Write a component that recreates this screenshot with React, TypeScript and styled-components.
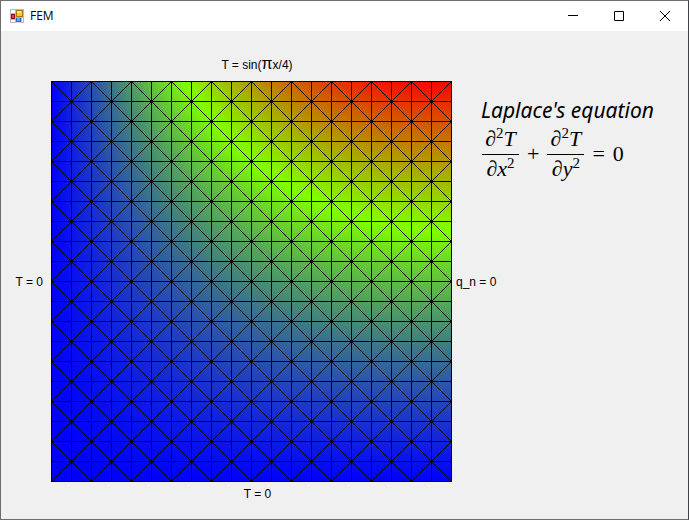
import React from "react";
import styled, { createGlobalStyle } from "styled-components";

const GlobalStyle = createGlobalStyle`
  * { box-sizing: border-box; }
  body { margin: 0; background: #f0f0f0; }
`;

const Window = styled.div`
  display: flex;
  flex-direction: column;
  min-height: 100vh;
  border: 1px solid #6d6d6f;
  border-right-color: #3d4148;
  background: #f0f0f0;
  color: #000;
  font-family: "Liberation Sans", Arial, sans-serif;
`;

const TitleBar = styled.header`
  display: flex;
  align-items: center;
  height: 30px;
  padding-left: 9px;
  background: #fff;
`;

const Title = styled.h1`
  flex: 1;
  margin: 0 0 0 6px;
  font: 400 12px/16px "Open Sans", "Noto Sans", sans-serif;
`;

const ControlButton = styled.button`
  display: flex;
  align-items: center;
  justify-content: center;
  width: 46px;
  height: 30px;
  padding: 0;
  border: 0;
  background: transparent;
  color: #000;
  &:hover { background: #e5e5e5; }
`;

const Stage = styled.main`
  display: grid;
  grid-template-columns: 50px auto minmax(0, 1fr);
  grid-template-rows: 50px auto 25px;
`;

const Label = styled.div`
  font-size: 12px;
  line-height: 16px;
`;

const TopLabel = styled(Label)`
  grid-area: 1 / 2;
  align-self: end;
  padding: 0 0 8px 11px;
  text-align: center;
`;

const Pi = styled.span`
  font-size: 16px;
  line-height: 1px;
`;

const LeftLabel = styled(Label)`
  grid-area: 2 / 1;
  align-self: center;
  padding-right: 8px;
  text-align: right;
`;

const RightLabel = styled(Label)`
  grid-area: 2 / 3;
  align-self: center;
  padding-left: 4px;
`;

const BottomLabel = styled(Label)`
  grid-area: 3 / 2;
  align-self: start;
  padding: 4px 0 0 12px;
  text-align: center;
`;

const Plot = styled.svg`
  grid-area: 2 / 2;
  display: block;
`;

const Notes = styled.section`
  grid-area: 2 / 3;
  align-self: start;
  padding: 15px 0 0 29px;
`;

const Heading = styled.h2`
  margin: 0;
  font: italic 400 21px/28px "Noto Sans", sans-serif;
  white-space: nowrap;
`;

const Equation = styled.div`
  display: flex;
  align-items: center;
  gap: 8px;
  margin-top: 3px;
  padding-left: 1px;
  font: 400 22px/24px "Liberation Serif", serif;
`;

const Fraction = styled.span`
  display: flex;
  flex-direction: column;
  align-items: center;
  min-width: 37px;
`;

const Term = styled.span<{ $over?: boolean }>`
  align-self: stretch;
  padding: ${(p) => (p.$over ? "0 0 3px" : "2px 0 0")};
  text-align: center;
  font-style: italic;
  border-bottom: ${(p) => (p.$over ? "1px solid #000" : "0")};
`;

const Power = styled.sup`
  font-size: 15px;
  line-height: 1px;
  font-style: normal;
`;

const CELLS = 20;
const STEP = 20;
const SIZE = CELLS * STEP;

type Node = [number, number];

const temperature = ([i, j]: Node) => {
  const x = (2 * i) / CELLS;
  const y = 2 - (2 * j) / CELLS;
  return (Math.sin((Math.PI * x) / 4) * Math.sinh((Math.PI * y) / 4)) / Math.sinh(Math.PI / 2);
};

const buildTriangles = () => {
  const list: Node[][] = [];
  for (let j = 0; j < CELLS; j++) {
    for (let i = 0; i < CELLS; i++) {
      const a: Node = [i, j];
      const b: Node = [i + 1, j];
      const c: Node = [i + 1, j + 1];
      const d: Node = [i, j + 1];
      if ((i + j) % 2 === 0) list.push([a, b, c], [a, c, d]);
      else list.push([a, b, d], [b, c, d]);
    }
  }
  return list;
};

// Temperature is linear inside an element, so one linear gradient shades it.
const shade = (nodes: Node[]) => {
  const [p, q, r] = nodes.map(([i, j]) => [i * STEP, j * STEP]);
  const [tp, tq, tr] = nodes.map(temperature);
  const det = (q[0] - p[0]) * (r[1] - p[1]) - (r[0] - p[0]) * (q[1] - p[1]);
  const gx = ((tq - tp) * (r[1] - p[1]) - (tr - tp) * (q[1] - p[1])) / det;
  const gy = ((tr - tp) * (q[0] - p[0]) - (tq - tp) * (r[0] - p[0])) / det;
  const g2 = gx * gx + gy * gy;
  const points = [p, q, r].map((v) => v.join(",")).join(" ");
  if (g2 < 1e-12) return { points, line: null };
  const x1 = p[0] - (tp * gx) / g2;
  const y1 = p[1] - (tp * gy) / g2;
  return { points, line: { x1, y1, x2: x1 + gx / g2, y2: y1 + gy / g2 } };
};

const elements = buildTriangles().map(shade);

const buildMesh = () => {
  let path = "";
  for (let k = 0; k <= CELLS; k++) {
    path += `M0 ${k * STEP}H${SIZE}M${k * STEP} 0V${SIZE}`;
  }
  for (let k = -CELLS + 2; k < CELLS; k += 2) {
    const from = Math.max(0, k) * STEP;
    const to = Math.min(CELLS, CELLS + k) * STEP;
    path += `M${from} ${from - k * STEP}L${to} ${to - k * STEP}`;
    path += `M${from} ${SIZE - from + k * STEP}L${to} ${SIZE - to + k * STEP}`;
  }
  return path;
};

const mesh = buildMesh();

const MeshPlot = () => (
  <Plot
    width={SIZE + 1}
    height={SIZE + 1}
    viewBox={`-0.5 -0.5 ${SIZE + 1} ${SIZE + 1}`}
    overflow="hidden"
    role="img"
    aria-label="Temperature over the finite element mesh"
  >
    <defs>
      <linearGradient id="scale">
        <stop offset="0" stopColor="#0000ff" />
        <stop offset="0.5" stopColor="#80ff00" />
        <stop offset="1" stopColor="#ff0000" />
      </linearGradient>
      {elements.map((e, n) =>
        e.line ? (
          <linearGradient key={n} id={`t${n}`} href="#scale" gradientUnits="userSpaceOnUse" {...e.line} />
        ) : null
      )}
    </defs>
    <g shapeRendering="crispEdges">
      {elements.map((e, n) => (
        <polygon key={n} points={e.points} fill={e.line ? `url(#t${n})` : "#0000ff"} />
      ))}
      <path d={mesh} fill="none" stroke="#000" strokeWidth="1" />
    </g>
  </Plot>
);

const AppIcon = () => (
  <svg width="14" height="14" viewBox="0 0 14 14" shapeRendering="crispEdges" aria-hidden="true">
    <rect width="14" height="14" fill="#b9b9b9" />
    <path d="M1 1h4v3H1zM1 11h4v2H1zM12 9h1v4h-1z" fill="#fff" />
    <path d="M6 13h5v1H6z" fill="#dcdcdc" />
    <rect x="6" y="1" width="7" height="7" fill="#b07900" />
    <rect x="7" y="2" width="5" height="5" fill="#fcc62e" />
    <path d="M7 2h4v2H7z" fill="#ffe48c" />
    <rect x="1" y="5" width="4" height="5" fill="#8f0d0d" />
    <rect x="2" y="6" width="2" height="3" fill="#d94b45" />
    <rect x="6" y="9" width="5" height="4" fill="#2a63c8" />
    <rect x="7" y="9" width="3" height="3" fill="#6ba2f4" />
  </svg>
);

const Partial = ({ variable }: { variable: string }) => (
  <Fraction>
    <Term $over>∂<Power>2</Power>T</Term>
    <Term>∂{variable}<Power>2</Power></Term>
  </Fraction>
);

export default function App() {
  return (
    <>
      <GlobalStyle />
      <Window>
        <TitleBar>
          <AppIcon />
          <Title>FEM</Title>
          <ControlButton type="button" aria-label="Minimize">
            <svg width="12" height="12" viewBox="0 0 12 12"><path d="M1 5.5h10" stroke="#000" /></svg>
          </ControlButton>
          <ControlButton type="button" aria-label="Maximize">
            <svg width="12" height="12" viewBox="0 0 12 12"><path d="M1.5 1.5h9v9h-9z" fill="none" stroke="#000" /></svg>
          </ControlButton>
          <ControlButton type="button" aria-label="Close">
            <svg width="12" height="12" viewBox="0 0 12 12"><path d="M1 1l10 10M11 1L1 11" stroke="#000" /></svg>
          </ControlButton>
        </TitleBar>
        <Stage>
          <TopLabel>T = sin(<Pi>π</Pi>x/4)</TopLabel>
          <LeftLabel>T = 0</LeftLabel>
          <MeshPlot />
          <RightLabel>q_n = 0</RightLabel>
          <Notes>
            <Heading>Laplace's equation</Heading>
            <Equation>
              <Partial variable="x" />
              <span>+</span>
              <Partial variable="y" />
              <span>=</span>
              <span>0</span>
            </Equation>
          </Notes>
          <BottomLabel>T = 0</BottomLabel>
        </Stage>
      </Window>
    </>
  );
}
